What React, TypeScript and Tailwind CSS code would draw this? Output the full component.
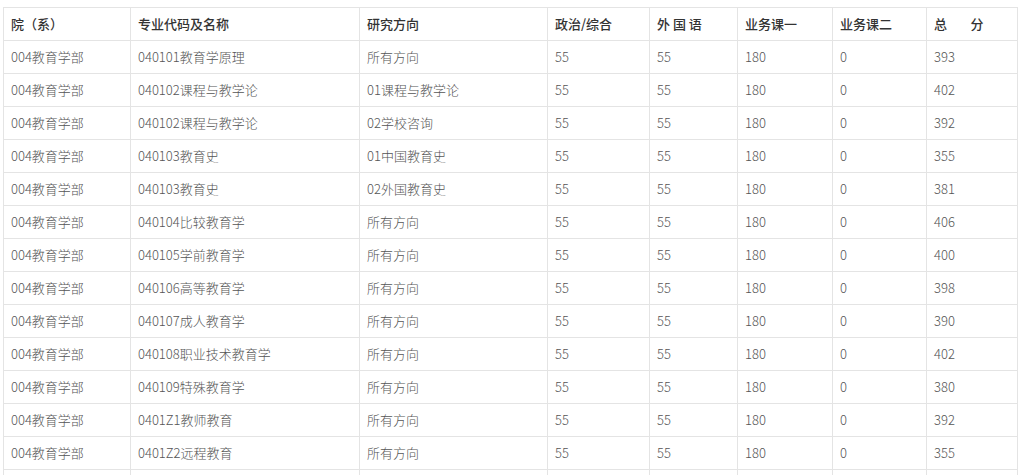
import React from "react";

interface Row {
  dept: string;
  major: string;
  direction: string;
  politics: string;
  foreign: string;
  course1: string;
  course2: string;
  total: string;
}

const rows: Row[] = [
  { dept: "004教育学部", major: "040101教育学原理", direction: "所有方向", politics: "55", foreign: "55", course1: "180", course2: "0", total: "393" },
  { dept: "004教育学部", major: "040102课程与教学论", direction: "01课程与教学论", politics: "55", foreign: "55", course1: "180", course2: "0", total: "402" },
  { dept: "004教育学部", major: "040102课程与教学论", direction: "02学校咨询", politics: "55", foreign: "55", course1: "180", course2: "0", total: "392" },
  { dept: "004教育学部", major: "040103教育史", direction: "01中国教育史", politics: "55", foreign: "55", course1: "180", course2: "0", total: "355" },
  { dept: "004教育学部", major: "040103教育史", direction: "02外国教育史", politics: "55", foreign: "55", course1: "180", course2: "0", total: "381" },
  { dept: "004教育学部", major: "040104比较教育学", direction: "所有方向", politics: "55", foreign: "55", course1: "180", course2: "0", total: "406" },
  { dept: "004教育学部", major: "040105学前教育学", direction: "所有方向", politics: "55", foreign: "55", course1: "180", course2: "0", total: "400" },
  { dept: "004教育学部", major: "040106高等教育学", direction: "所有方向", politics: "55", foreign: "55", course1: "180", course2: "0", total: "398" },
  { dept: "004教育学部", major: "040107成人教育学", direction: "所有方向", politics: "55", foreign: "55", course1: "180", course2: "0", total: "390" },
  { dept: "004教育学部", major: "040108职业技术教育学", direction: "所有方向", politics: "55", foreign: "55", course1: "180", course2: "0", total: "402" },
  { dept: "004教育学部", major: "040109特殊教育学", direction: "所有方向", politics: "55", foreign: "55", course1: "180", course2: "0", total: "380" },
  { dept: "004教育学部", major: "0401Z1教师教育", direction: "所有方向", politics: "55", foreign: "55", course1: "180", course2: "0", total: "392" },
  { dept: "004教育学部", major: "0401Z2远程教育", direction: "所有方向", politics: "55", foreign: "55", course1: "180", course2: "0", total: "355" },
  { dept: "", major: "", direction: "", politics: "", foreign: "", course1: "", course2: "", total: "" },
];

const headers = ["院（系）", "专业代码及名称", "研究方向", "政治/综合", "外 国 语", "业务课一", "业务课二", "总        分"];
const widths = ["w-[127px]", "w-[229px]", "w-[188px]", "w-[102px]", "w-[88px]", "w-[95px]", "w-[94px]", "w-[91px]"];

const cell = "h-[33px] border border-[#e4e4e4] pl-[7px] text-left align-middle whitespace-pre";

export default function App() {
  return (
    <div className="h-[475px] w-[1024px] overflow-hidden bg-white pl-[3px] pt-[7px] font-['Noto_Sans_CJK_SC',sans-serif] text-[13px]">
      <table className="w-[1014px] table-fixed border-collapse">
        <colgroup>
          {widths.map((w, i) => (
            <col key={i} className={w} />
          ))}
        </colgroup>
        <thead>
          <tr>
            {headers.map((h) => (
              <th key={h} className={`${cell} font-medium text-[#333]`}>
                {h}
              </th>
            ))}
          </tr>
        </thead>
        <tbody>
          {rows.map((r, i) => (
            <tr key={i} className="font-light text-[#555]">
              <td className={cell}>{r.dept}</td>
              <td className={cell}>{r.major}</td>
              <td className={cell}>{r.direction}</td>
              <td className={cell}>{r.politics}</td>
              <td className={cell}>{r.foreign}</td>
              <td className={cell}>{r.course1}</td>
              <td className={cell}>{r.course2}</td>
              <td className={cell}>{r.total}</td>
            </tr>
          ))}
        </tbody>
      </table>
    </div>
  );
}
